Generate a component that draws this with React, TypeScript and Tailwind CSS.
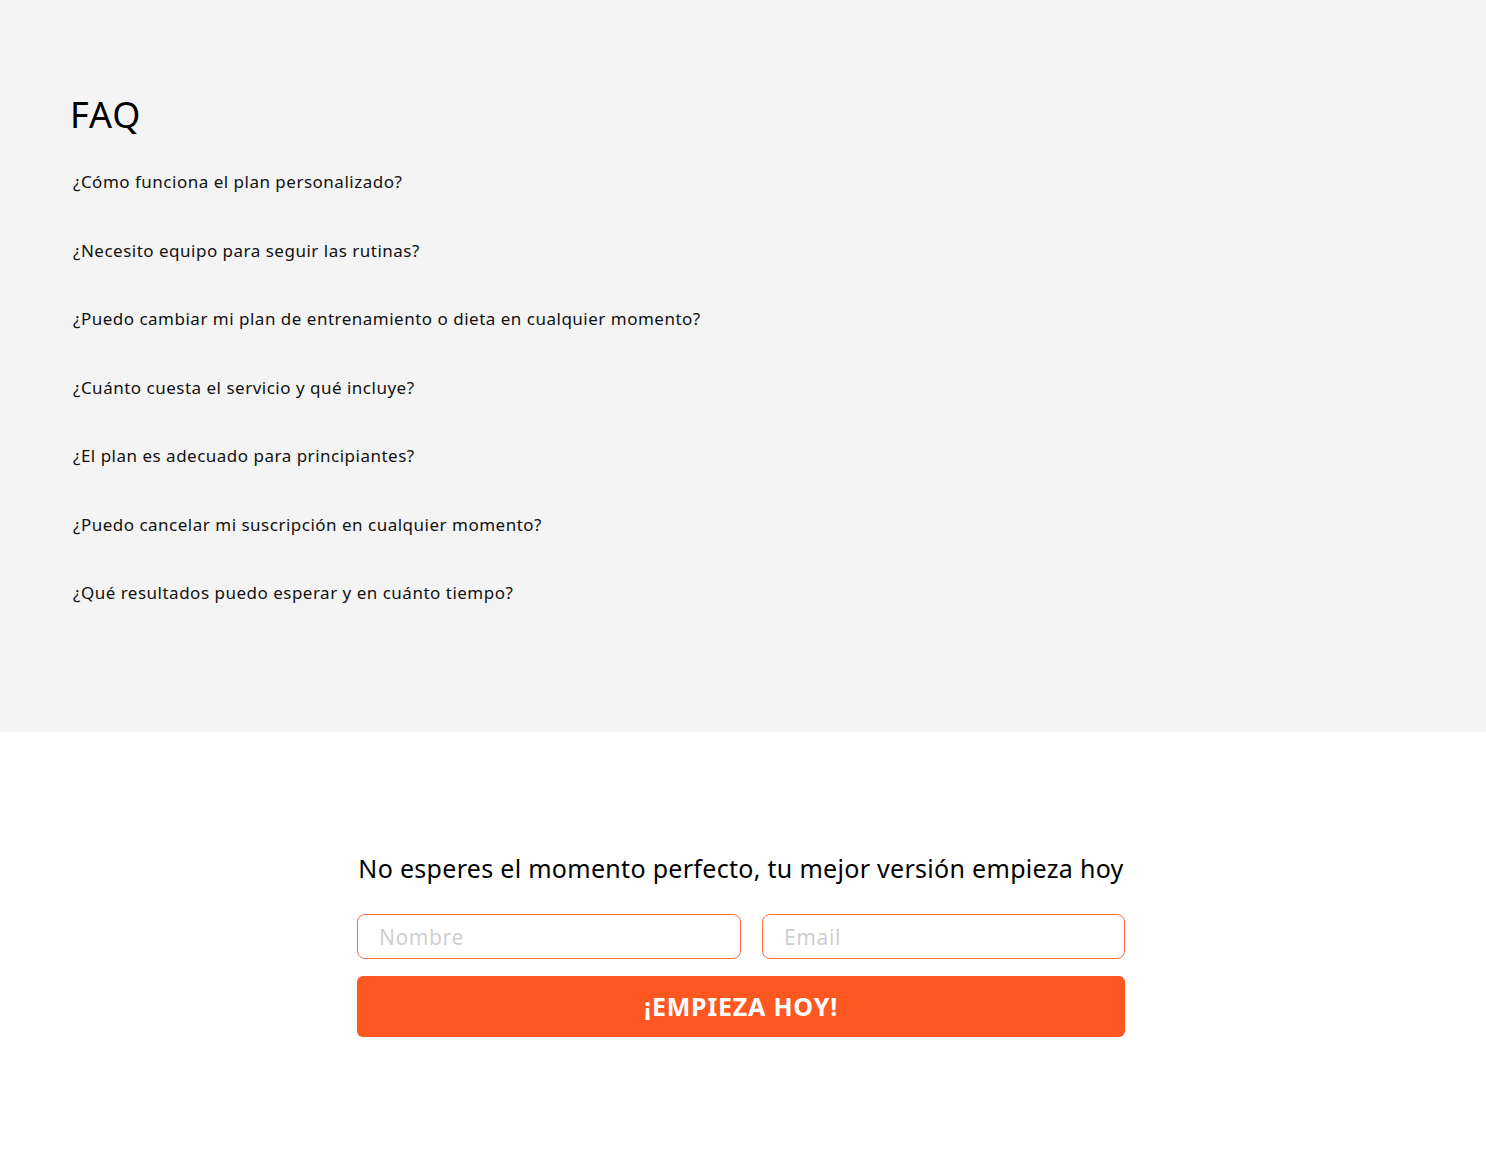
import React from 'react';

const questions = [
  '¿Cómo funciona el plan personalizado?',
  '¿Necesito equipo para seguir las rutinas?',
  '¿Puedo cambiar mi plan de entrenamiento o dieta en cualquier momento?',
  '¿Cuánto cuesta el servicio y qué incluye?',
  '¿El plan es adecuado para principiantes?',
  '¿Puedo cancelar mi suscripción en cualquier momento?',
  '¿Qué resultados puedo esperar y en cuánto tiempo?',
];

export default function App() {
  return (
    <div className="min-h-[1151px] bg-white text-black" style={{ fontFamily: '"Noto Sans", sans-serif' }}>
      <section className="h-[732px] bg-[#f4f4f4] px-[70px] pt-[93px]">
        <h2 className="text-[36px] leading-[44px] font-normal tracking-[1px]">FAQ</h2>
        <ul className="mt-[33px] pl-[3px]">
          {questions.map((q) => (
            <li key={q} className="h-[68.5px] text-[17px] leading-[24px] tracking-[0.5px] text-[#111]">
              {q}
            </li>
          ))}
        </ul>
      </section>

      <section className="flex justify-center pr-[4px] pt-[118px] pb-[114px]">
        <div className="w-[768px]">
          <h3 className="whitespace-nowrap text-center text-[25px] leading-[36px] font-normal tracking-[0.3px]">
            No esperes el momento perfecto, tu mejor versión empieza hoy
          </h3>
          <form className="mt-[28px] flex flex-col gap-[17px]" onSubmit={(e) => e.preventDefault()}>
            <div className="flex gap-[21px]">
              <input
                placeholder="Nombre"
                className="h-[45px] w-[384px] rounded-[8px] border border-[#ff6a40] bg-white px-[21px] text-[21px] tracking-[0.6px] placeholder:text-[#cfcfcf] outline-none"
              />
              <input
                placeholder="Email"
                className="h-[45px] flex-1 rounded-[8px] border border-[#ff6a40] bg-white px-[21px] text-[21px] tracking-[0.6px] placeholder:text-[#cfcfcf] outline-none"
              />
            </div>
            <button
              type="submit"
              className="h-[61px] w-full rounded-[6px] bg-[#ff5722] text-[25px] font-bold tracking-[0.8px] text-white"
            >
              ¡EMPIEZA HOY!
            </button>
          </form>
        </div>
      </section>
    </div>
  );
}
